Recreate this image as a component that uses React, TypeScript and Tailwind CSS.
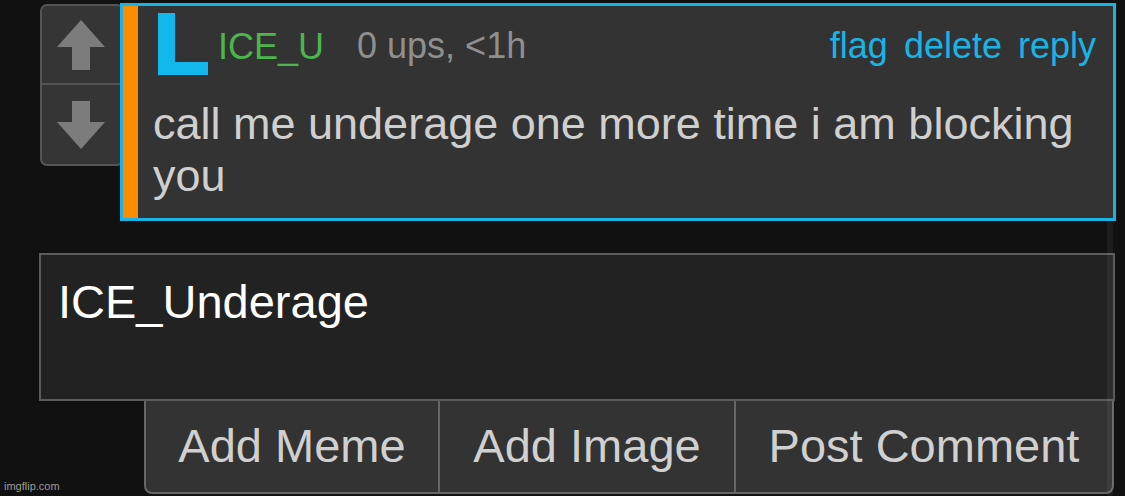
import React from "react";

const UpArrow = () => (
  <svg width="48" height="50" viewBox="0 0 48 50">
    <polygon points="24,0 48,27 33,27 33,50 15,50 15,27 0,27" fill="#7c7c7c" />
  </svg>
);

const DownArrow = () => (
  <svg width="48" height="48" viewBox="0 0 48 48">
    <polygon points="15,0 33,0 33,21 48,21 24,48 0,21 15,21" fill="#7c7c7c" />
  </svg>
);

// the "L" avatar in the comment header
const LetterLogo = () => (
  <svg width="50" height="62" viewBox="0 0 50 62">
    <rect x="0" y="0" width="17" height="62" fill="#12b8ec" />
    <rect x="0" y="49" width="50" height="13" fill="#12b8ec" />
  </svg>
);

export default function App() {
  return (
    <div className="relative w-[1125px] h-[496px] overflow-hidden bg-[#111111] font-['Liberation_Sans',Arial,sans-serif]">
      {/* Comment row */}
      <div className="flex items-start pl-[40px] pt-[3px]">
        <div className="mt-[1px] w-[84px] h-[162px] flex flex-col rounded-[7px] border-2 border-[#555555] bg-[#353535]">
          <div className="flex h-[79px] items-center justify-center border-b-2 border-[#555555] pr-[2px]">
            <UpArrow />
          </div>
          <div className="flex flex-1 items-center justify-center pr-[2px]">
            <DownArrow />
          </div>
        </div>

        <div className="relative z-10 -ml-[4px] flex h-[218px] w-[996px] border-[3px] border-[#1ab3e6] bg-[#333333]">
          <div className="w-[15px] bg-[#ff8c00]" />
          <div className="flex flex-1 flex-col pl-[20px] pr-[17px]">
            {/* Header */}
            <div className="flex h-[72px] items-start pt-[7px]">
              <LetterLogo />
              <span className="ml-[10px] mt-[16px] text-[36px] leading-none text-[#4cb54c]">ICE_U</span>
              <span className="ml-[33px] mt-[15px] text-[36px] leading-none text-[#8f8f8f]">0 ups, &lt;1h</span>
              <div className="ml-auto mt-[15px] flex gap-[16px] text-[36px] leading-none text-[#1ab3e6]">
                <span>flag</span>
                <span>delete</span>
                <span>reply</span>
              </div>
            </div>
            {/* Body */}
            <p className="-ml-[5px] mt-[20px] text-[45px] leading-[52px] text-[#cfcfcf]">
              call me underage one more time i am blocking you
            </p>
          </div>
        </div>
      </div>

      {/* Reply box */}
      <div className="ml-[39px] mt-[32px] h-[148px] w-[1076px] border-2 border-[#5b5b5b] bg-[#222222] pl-[17px] pt-[23px]">
        <span className="text-[47px] leading-none text-white">ICE_Underage</span>
      </div>

      <div className="ml-[144px] flex h-[93px] w-[970px] overflow-hidden rounded-b-[8px] border-x-2 border-b-2 border-[#666666] bg-[#333333] text-[47px] text-[#d0d0d0]">
        <button className="flex w-[292px] items-center justify-center">Add Meme</button>
        <button className="flex w-[296px] items-center justify-center border-l-2 border-[#666666]">Add Image</button>
        <button className="flex flex-1 items-center justify-center border-l-2 border-[#666666]">Post Comment</button>
      </div>

      {/* overlay scrollbar */}
      <div className="absolute left-[1107px] top-[105px] h-[391px] w-[6px] rounded-full bg-white/[0.05]" />

      <span className="absolute bottom-[4px] left-[4px] text-[11px] leading-none text-[#9a9a9a]">imgflip.com</span>
    </div>
  );
}
